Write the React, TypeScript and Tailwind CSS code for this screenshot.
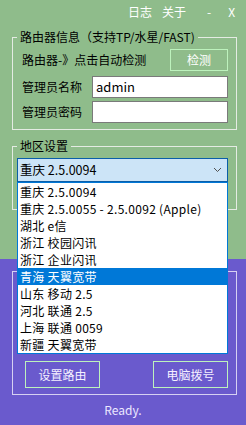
const regions = [
  '重庆 2.5.0094',
  '重庆 2.5.0055 - 2.5.0092 (Apple)',
  '湖北 e信',
  '浙江 校园闪讯',
  '浙江 企业闪讯',
  '青海 天翼宽带',
  '山东 移动 2.5',
  '河北 联通 2.5',
  '上海 联通 0059',
  '新疆 天翼宽带',
]

const App = () => {
  const selected = 5

  return (
    <div className="relative flex h-[425px] w-[246px] flex-col overflow-hidden font-['Noto_Sans_CJK_SC',sans-serif] text-[12px] leading-[16px] text-black">
      {/* top panel */}
      <div className="h-[259px] bg-[#8fbc8b]">
        <div className="flex h-[29px] items-start pt-[4px] text-white">
          <span className="ml-[128px]">日志</span>
          <span className="ml-[10px]">关于</span>
          <span className="ml-[21px]">-</span>
          <span className="ml-[17px]">X</span>
        </div>

        <fieldset className="mx-[12px] w-[225px] border border-[#e4ebe3] pb-[6px]">
          <legend className="ml-[4px] px-[3px]">路由器信息（支持TP/水星/FAST)</legend>
          <div className="mt-[4px] flex h-[22px] items-center justify-between pl-[9px] pr-[8px]">
            <span>路由器-》点击自动检测</span>
            <button className="h-[22px] w-[58px] border border-[#bdf2bd] text-white">检测</button>
          </div>
          <div className="mt-[5px] flex items-center pl-[9px]">
            <span className="w-[70px]">管理员名称</span>
            <div className="flex h-[22px] w-[136px] items-center border border-[#7a7a7a] bg-white pl-[3px] text-[13px]">
              admin
            </div>
          </div>
          <div className="mt-[3px] flex items-center pl-[9px]">
            <span className="w-[70px]">管理员密码</span>
            <div className="h-[22px] w-[136px] border border-[#7a7a7a] bg-white" />
          </div>
        </fieldset>

        <fieldset className="mx-[12px] mt-[8px] w-[225px] border border-[#e4ebe3] pb-[27px]">
          <legend className="ml-[4px] px-[3px]">地区设置</legend>
          <div className="ml-[4px] mt-[4px] flex h-[24px] w-[211px] items-center justify-between border border-[#0a5ea8] bg-[#cce4f7] pl-[2px] pr-[5px] text-[12.5px]">
            <span>{regions[0]}</span>
            <svg width="9" height="6" viewBox="0 0 9 6" fill="none">
              <path d="M1 1l3.5 3.5L8 1" stroke="#505050" strokeWidth="1" />
            </svg>
          </div>
        </fieldset>
      </div>

      {/* bottom panel */}
      <div className="flex flex-1 flex-col bg-[#6a5acd]">
        <div className="mx-[12px] mt-[12px] flex h-[124px] w-[225px] items-end justify-between border border-[#d6d1f2] pb-[6px] pl-[12px] pr-[8px]">
          <button className="h-[27px] w-[75px] border border-[#bdf2bd] text-[#f4f0ff]">设置路由</button>
          <button className="h-[27px] w-[75px] border border-[#bdf2bd] text-[#f4f0ff]">电脑拨号</button>
        </div>
        <div className="mt-[7px] text-center text-[#ece8ff]">Ready.</div>
      </div>

      {/* open dropdown list */}
      <div className="absolute left-[17px] top-[182px] w-[211px] border border-[#0078d7] bg-white text-[12px] tracking-[0.3px]">
        {regions.map((r, i) => (
          <div
            key={r}
            className={
              i === selected
                ? 'h-[17px] overflow-hidden bg-[#0078d7] pl-[2px] leading-[17px] text-white'
                : 'h-[17px] overflow-hidden pl-[2px] leading-[17px]'
            }
          >
            {r}
          </div>
        ))}
      </div>
    </div>
  )
}

export default App
